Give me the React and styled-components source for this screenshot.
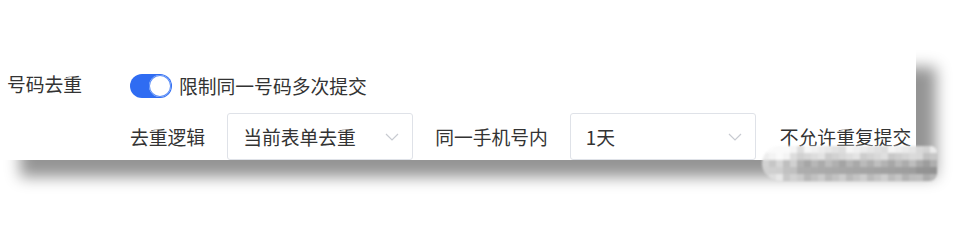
import React from "react";
import styled, { createGlobalStyle } from "styled-components";

const Global = createGlobalStyle`
  html, body { margin: 0; padding: 0; background: #ffffff; }
  body {
    width: 957px; height: 247px; overflow: hidden;
    font-family: "Noto Sans CJK SC", "Noto Sans", sans-serif;
  }
`;

const Stage = styled.div`
  position: relative;
  width: 957px;
  height: 247px;
  padding-top: 50px;
  box-sizing: border-box;
`;

const Panel = styled.div`
  width: 916px;
  height: 110px;
  background: #fff;
  box-shadow: 20px 17px 14px rgba(0, 0, 0, 0.42);
  box-sizing: border-box;
  padding: 22px 0 0 7px;
  display: grid;
  grid-template-columns: 123px 1fr;
  row-gap: 14px;
  color: #333;
  font-size: 18.8px;
`;

const Label = styled.div`
  height: 24px;
  line-height: 24px;
  white-space: nowrap;
`;

const Field = styled.div`
  display: flex;
  align-items: center;
  gap: ${(p) => p.$gap || 8}px;
  white-space: nowrap;
`;

const Toggle = styled.div`
  width: 42px;
  height: 24px;
  border-radius: 12px;
  background: #2f6cf2;
  box-sizing: border-box;
  display: flex;
  justify-content: flex-end;
  align-items: center;
  padding: 1px;
`;

const Knob = styled.div`
  width: 22px;
  height: 22px;
  border-radius: 50%;
  background: #fff;
  box-shadow: inset 0 0 0 1px #5b8ef7;
`;

const Row2 = styled.div`
  grid-column: 2;
  display: flex;
  align-items: center;
  gap: 22px;
  white-space: nowrap;
`;

const Select = styled.div`
  width: ${(p) => p.$w}px;
  height: 47px;
  box-sizing: border-box;
  border: 1px solid #dfe2e8;
  border-radius: 3px;
  display: flex;
  align-items: center;
  justify-content: space-between;
  padding: 0 13px 0 15px;
  color: #333;
`;

const Chevron = () => (
  <svg width="14" height="8" viewBox="0 0 14 8">
    <path d="M1 1 L7 7 L13 1" fill="none" stroke="#c8cbd1" strokeWidth="1.2" />
  </svg>
);

const Tail = styled.span`
  margin-left: 2px;
`;

const Mosaic = styled.div`
  position: absolute;
  left: 762px;
  top: 146px;
  display: grid;
  grid-template-columns: repeat(25, 7px);
  grid-auto-rows: 7px;
  border-radius: 18px 6px 8px 18px;
  overflow: hidden;
  filter: blur(0.8px);
`;

const Cell = styled.div`
  background: rgb(${(p) => p.$v}, ${(p) => p.$v}, ${(p) => p.$v});
`;

const rowBase = [232, 214, 178, 168, 192];
const cells = [];
for (let r = 0; r < 5; r++) {
  for (let c = 0; c < 25; c++) {
    const noise = ((r * 37 + c * 53 + r * c * 11) % 29) - 14;
    let v = rowBase[r] + noise;
    if (c < 3) v += 30;
    else if (c < 5) v += 18;
    if (c > 21) v -= 8;
    v = Math.max(140, Math.min(250, v));
    cells.push(v);
  }
}

export default function App() {
  return (
    <>
      <Global />
      <Stage>
        <Panel>
          <Label>号码去重</Label>
          <Field $gap={7}>
            <Toggle>
              <Knob />
            </Toggle>
            <span>限制同一号码多次提交</span>
          </Field>
          <Row2>
            <span>去重逻辑</span>
            <Select $w={186}>
              <span>当前表单去重</span>
              <Chevron />
            </Select>
            <span>同一手机号内</span>
            <Select $w={186}>
              <span>1天</span>
              <Chevron />
            </Select>
            <Tail>不允许重复提交</Tail>
          </Row2>
        </Panel>
        <Mosaic>
          {cells.map((v, i) => (
            <Cell key={i} $v={v} />
          ))}
        </Mosaic>
      </Stage>
    </>
  );
}
